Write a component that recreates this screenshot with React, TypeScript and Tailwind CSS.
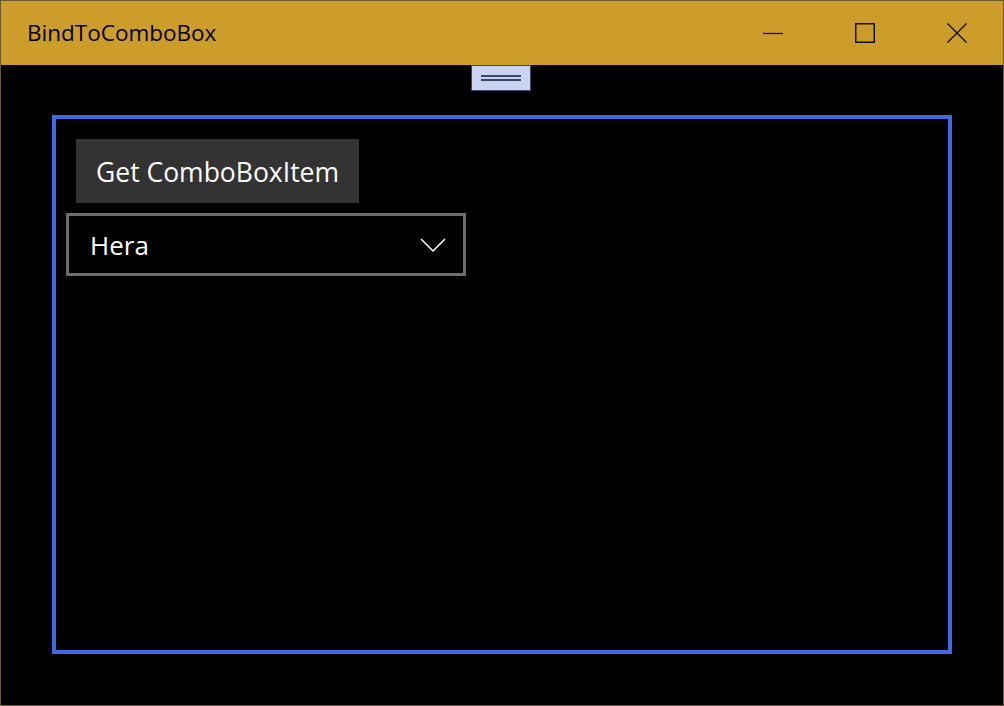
import React from 'react';

const font = { fontFamily: '"Open Sans", "Noto Sans", sans-serif' };

const TitleBar: React.FC = () => (
  <div className="flex h-[64px] items-center bg-[#cc9d2b] text-black">
    <span className="ml-[26px] text-[22.5px]">BindToComboBox</span>
    <div className="ml-auto flex h-full">
      <div className="flex w-[92px] items-center justify-center">
        <svg width="20" height="20" viewBox="0 0 20 20">
          <path d="M0 10.5H20" stroke="#111" strokeWidth="1.3" />
        </svg>
      </div>
      <div className="flex w-[92px] items-center justify-center">
        <svg width="20" height="20" viewBox="0 0 20 20">
          <rect x="0.75" y="0.75" width="18.5" height="18.5" fill="none" stroke="#111" strokeWidth="1.5" />
        </svg>
      </div>
      <div className="flex w-[92px] items-center justify-center">
        <svg width="20" height="20" viewBox="0 0 20 20">
          <path d="M0.5 0.5L19.5 19.5M19.5 0.5L0.5 19.5" stroke="#111" strokeWidth="1.4" />
        </svg>
      </div>
    </div>
  </div>
);

export default function App() {
  return (
    <div
      className="flex h-[706px] w-[1004px] flex-col overflow-hidden border border-[#6b5a2e] bg-black"
      style={font}
    >
      <TitleBar />
      <div className="flex flex-1 flex-col">
        <div className="flex justify-center">
          <div className="ml-[-2px] flex h-[26px] w-[60px] flex-col items-center justify-center gap-[2px] border border-[#3b4470] bg-[#c8d4f0]">
            <div className="h-[2px] w-[40px] bg-[#3b4470]" />
            <div className="h-[2px] w-[40px] bg-[#3b4470]" />
          </div>
        </div>
        <div className="mx-[51px] mb-[51px] mt-[24px] flex flex-1 flex-col border-4 border-[#4169e1]">
          <button className="ml-[20px] mt-[20px] flex h-[64px] w-[283px] items-center justify-center bg-[#333333] pt-[3px] text-[26.5px] text-white">
            Get ComboBoxItem
          </button>
          <div className="ml-[10px] mt-[10px] flex h-[63px] w-[400px] items-center border-[3px] border-[#6e6e6e] pl-[21px] pr-[17px]">
            <span className="pt-[1px] text-[26px] text-white">Hera</span>
            <svg className="ml-auto" width="26" height="16" viewBox="0 0 26 16">
              <path d="M1 2L13 14L25 2" fill="none" stroke="#fff" strokeWidth="1.5" />
            </svg>
          </div>
        </div>
      </div>
    </div>
  );
}
